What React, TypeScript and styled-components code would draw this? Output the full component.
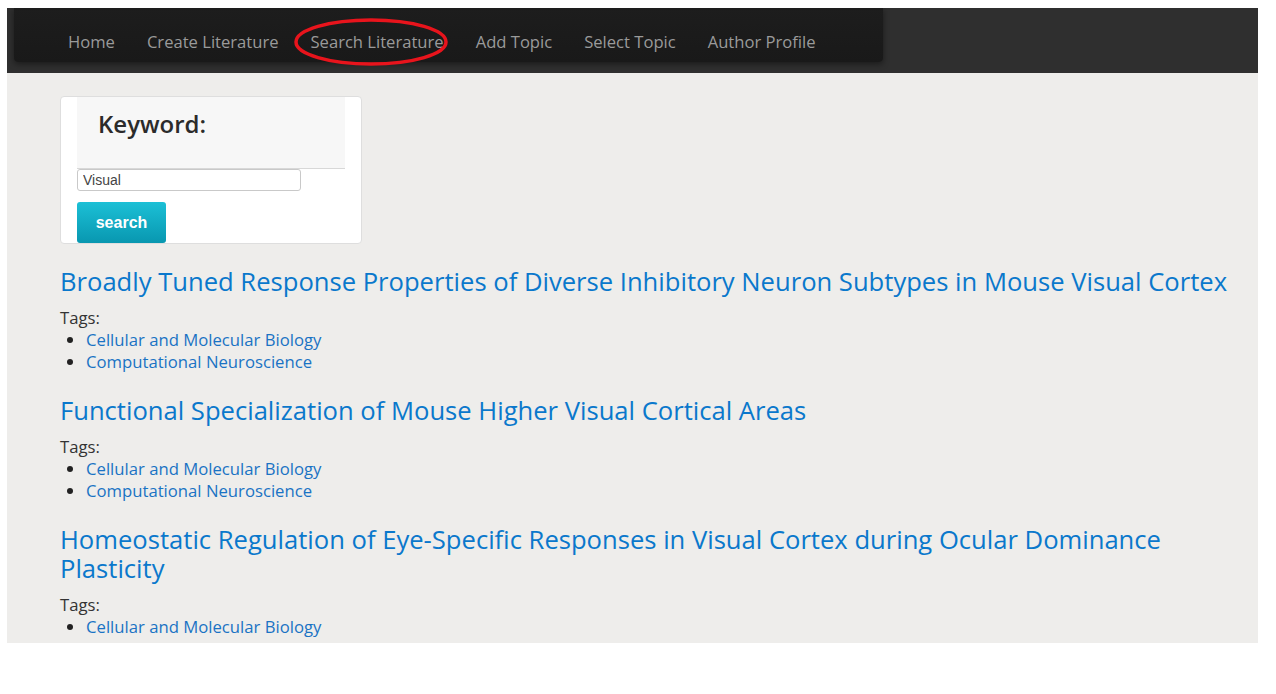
import React from 'react';
import styled, { createGlobalStyle } from 'styled-components';

const GlobalStyle = createGlobalStyle`
  html, body {
    margin: 0;
    padding: 0;
    background: #ffffff;
  }
  body {
    font-family: 'Open Sans', 'Noto Sans', sans-serif;
  }
`;

const navItems = ['Home', 'Create Literature', 'Search Literature', 'Add Topic', 'Select Topic', 'Author Profile'];

const results = [
  {
    title: 'Broadly Tuned Response Properties of Diverse Inhibitory Neuron Subtypes in Mouse Visual Cortex',
    tags: ['Cellular and Molecular Biology', 'Computational Neuroscience'],
  },
  {
    title: 'Functional Specialization of Mouse Higher Visual Cortical Areas',
    tags: ['Cellular and Molecular Biology', 'Computational Neuroscience'],
  },
  {
    title: 'Homeostatic Regulation of Eye-Specific Responses in Visual Cortex during Ocular Dominance Plasticity',
    tags: ['Cellular and Molecular Biology', 'Computational Neuroscience'],
  },
];

const App = () => {
  return (
    <>
      <GlobalStyle />
      <Frame>
        <Header>
          <NavBar>
            {navItems.map((item) => (
              <NavItem key={item}>
                {item}
                {item === 'Search Literature' && (
                  <Circle viewBox="0 0 158 50" width="158" height="50">
                    <ellipse cx="79" cy="25" rx="75" ry="22" fill="none" stroke="#e8141c" strokeWidth="3.5" />
                  </Circle>
                )}
              </NavItem>
            ))}
          </NavBar>
        </Header>
        <Content>
          <SearchCard>
            <Well>
              <Label>Keyword:</Label>
            </Well>
            <KeywordInput type="text" defaultValue="Visual" />
            <SearchBtn>search</SearchBtn>
          </SearchCard>
          {results.map((r) => (
            <Result key={r.title}>
              <Title href="#">{r.title}</Title>
              <TagsLabel>Tags:</TagsLabel>
              <TagList>
                {r.tags.map((tag) => (
                  <Tag key={tag}>
                    <TagLink href="#">{tag}</TagLink>
                  </Tag>
                ))}
              </TagList>
            </Result>
          ))}
        </Content>
      </Frame>
    </>
  );
};

export default App;

const Frame = styled.div`
  width: 1251px;
  height: 635px;
  margin: 8px 0 0 7px;
  background: #eeedeb;
  overflow: hidden;
`;

const Header = styled.div`
  height: 65px;
  background: #2f2f2f;
  padding-left: 7px;
  box-sizing: border-box;
`;

const NavBar = styled.nav`
  width: 869px;
  height: 54px;
  background: linear-gradient(#1d1d1d, #191919);
  border-radius: 0 0 4px 4px;
  box-shadow: 0 2px 6px rgba(0, 0, 0, 0.45);
  display: flex;
  align-items: center;
  padding: 13px 0 0 38px;
  box-sizing: border-box;
`;

const NavItem = styled.a`
  position: relative;
  padding: 0 16px;
  font-size: 16.6px;
  color: #9a9a9a;
  white-space: nowrap;
  cursor: pointer;
`;

const Circle = styled.svg`
  position: absolute;
  left: -3px;
  top: 50%;
  transform: translateY(-50%);
  pointer-events: none;
`;

const Content = styled.div`
  padding: 23px 0 0 53px;
`;

const SearchCard = styled.div`
  width: 302px;
  height: 148px;
  background: #ffffff;
  border: 1px solid #dedede;
  border-radius: 4px;
  box-sizing: border-box;
  padding: 0 16px;
  margin-bottom: 23px;
`;

const Well = styled.div`
  height: 72px;
  background: #f7f7f7;
  border-bottom: 1px solid #d8d8d8;
  padding: 0 0 18px 21px;
  display: flex;
  align-items: center;
  box-sizing: border-box;
`;

const Label = styled.h2`
  margin: 0;
  font-size: 24px;
  font-weight: 600;
  color: #2b2b2b;
`;

const KeywordInput = styled.input`
  display: block;
  width: 224px;
  height: 22px;
  box-sizing: border-box;
  margin: 0;
  border: 1px solid #c9c9c9;
  border-radius: 3px;
  padding: 0 5px;
  font-family: 'Liberation Sans', Arial, sans-serif;
  font-size: 14px;
  color: #444;
  outline: none;
`;

const SearchBtn = styled.button`
  display: block;
  margin-top: 11px;
  width: 89px;
  height: 41px;
  border: none;
  border-radius: 3px;
  background: linear-gradient(#1cc0d6, #0897b0);
  color: #ffffff;
  font-family: 'Liberation Sans', Arial, sans-serif;
  font-weight: bold;
  font-size: 16px;
  cursor: pointer;
`;

const Result = styled.div`
  padding-right: 20px;
  margin-bottom: 23px;
`;

const Title = styled.a`
  display: block;
  font-size: 25.6px;
  line-height: 29px;
  color: #0a78cc;
  text-decoration: none;
  margin-bottom: 11px;
`;

const TagsLabel = styled.div`
  font-size: 16.7px;
  line-height: 22px;
  color: #333333;
`;

const TagList = styled.ul`
  margin: 0;
  padding-left: 26px;
  list-style: disc;
  color: #222;
`;

const Tag = styled.li`
  font-size: 16.7px;
  line-height: 22px;
`;

const TagLink = styled.a`
  color: #1a73c4;
  text-decoration: none;
`;
